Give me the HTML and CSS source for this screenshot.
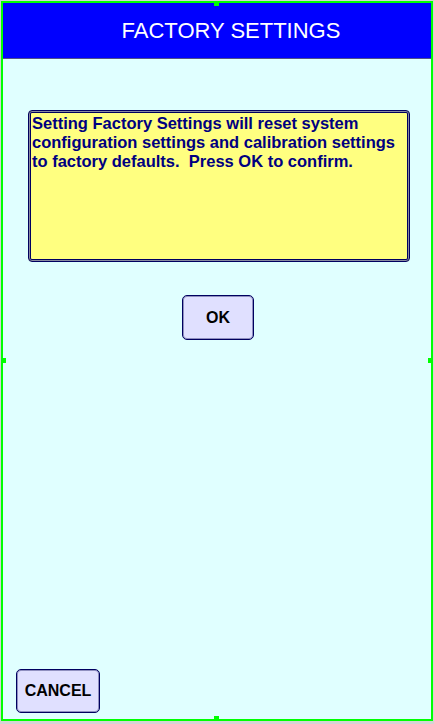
FILE: index.html
```html
<!DOCTYPE html>
<html>
<head>
<meta charset="utf-8">
<link rel="stylesheet" href="styles.css">
</head>
<body>
<div class="frame">
  <div class="header"><span class="title">FACTORY SETTINGS</span></div>
  <div class="message">Setting Factory Settings will reset system<br>configuration settings and calibration settings<br>to factory defaults.&nbsp; Press OK to confirm.</div>
  <button class="btn ok">OK</button>
  <button class="btn cancel">CANCEL</button>
  <span class="handle h-top"></span>
  <span class="handle h-bottom"></span>
  <span class="handle h-left"></span>
  <span class="handle h-right"></span>
</div>
</body>
</html>
```
FILE: styles.css
```css
html, body {
  margin: 0;
  padding: 0;
  background: #d4d4d4;
}
body {
  width: 434px;
  height: 724px;
  overflow: hidden;
}
.frame {
  position: relative;
  margin: 1px;
  width: 432px;
  height: 720px;
  box-sizing: border-box;
  border: 2px solid #00ff00;
  background: #e0ffff;
  display: flex;
  flex-direction: column;
  font-family: "Liberation Sans", Arial, sans-serif;
}
.header {
  height: 55px;
  background: #0000ff;
  border-bottom: 1px solid #50508a;
  display: flex;
  align-items: center;
  justify-content: center;
  padding-left: 28px;
  flex-shrink: 0;
}
.title {
  color: #ffffff;
  font-size: 22px;
  line-height: 25px;
}
.message {
  margin: 51px 0 0 25px;
  width: 382px;
  height: 152px;
  box-sizing: border-box;
  background: #ffff80;
  border: 1px solid #000060;
  box-shadow: inset 0 0 0 1px #8a8aa0, inset 0 0 0 2px #000060;
  border-radius: 4px;
  padding: 3px 0 0 3px;
  color: #000080;
  font-weight: bold;
  font-size: 16.5px;
  line-height: 19px;
  flex-shrink: 0;
}
.btn {
  font-family: "Liberation Sans", Arial, sans-serif;
  font-weight: bold;
  font-size: 16px;
  color: #000000;
  background: #e0e0ff;
  border: 1px solid #000060;
  box-shadow: inset 0 0 0 1px #9090c0;
  border-radius: 5px;
  padding: 0;
  flex-shrink: 0;
}
.ok {
  width: 72px;
  height: 45px;
  margin: 33px 0 0 179px;
}
.cancel {
  width: 84px;
  height: 44px;
  margin: auto 0 6px 13px;
}
.handle {
  position: absolute;
  width: 5px;
  height: 5px;
  background: #00ff00;
}
.h-top { top: -2px; left: 211px; }
.h-bottom { bottom: -2px; left: 211px; }
.h-left { left: -2px; top: 355px; }
.h-right { right: -2px; top: 355px; }
```
